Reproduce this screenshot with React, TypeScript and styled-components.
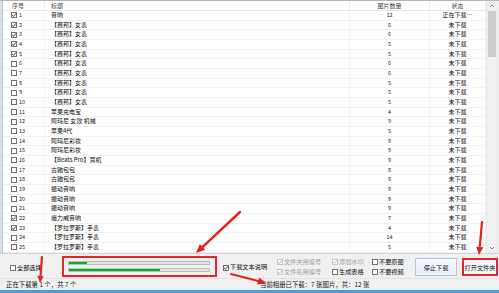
import React from "react";
import styled, { createGlobalStyle } from "styled-components";

const Global = createGlobalStyle`
  html, body { margin: 0; padding: 0; background: #ffffff; overflow: hidden; }
  body { font-family: "Noto Sans CJK SC", "Noto Sans", sans-serif; }
`;

type Row = { n: number; checked: boolean; title: string; count: number; status: string };

const titles: [boolean, string, number][] = [
  [true, "音响", 12],
  [true, "【赛邦】女表", 6],
  [true, "【赛邦】女表", 6],
  [true, "【赛邦】女表", 5],
  [true, "【赛邦】女表", 5],
  [false, "【赛邦】女表", 6],
  [false, "【赛邦】女表", 6],
  [false, "【赛邦】女表", 5],
  [false, "【赛邦】女表", 5],
  [false, "【赛邦】女表", 5],
  [false, "苹果充电宝", 4],
  [false, "阿玛尼 女款 机械", 9],
  [false, "苹果4代", 5],
  [false, "阿玛尼彩妆", 9],
  [false, "阿玛尼彩妆", 9],
  [false, "【Beats Pro】耳机", 9],
  [false, "古驰包包", 8],
  [false, "古驰包包", 8],
  [false, "振动音响", 9],
  [false, "振动音响", 9],
  [false, "振动音响", 9],
  [true, "魔力威音响", 7],
  [true, "【罗拉罗斯】手表", 4],
  [false, "【罗拉罗斯】手表", 14],
  [false, "【罗拉罗斯】手表", 5],
];

const rows: Row[] = titles.map(([c, t, k], i) => ({
  n: i + 1,
  checked: c,
  title: t,
  count: k,
  status: i === 0 ? "正在下载…" : "未下载",
}));

const Window = styled.div`
  position: relative;
  width: 499px;
  height: 293px;
  display: flex;
  flex-direction: column;
  background: #f0f0f0;
  overflow: hidden;
`;

const ListFrame = styled.div`
  height: 254px;
  display: flex;
  border-top: 1px solid #b4b4b4;
  border-bottom: 1px solid #d4d4d4;
  background: #ffffff;
  box-sizing: border-box;
`;

const LeftEdge = styled.div`
  width: 3px;
  background: #d3dfeb;
  border-right: 1px solid #b9c3cc;
  box-sizing: border-box;
`;

const Grid = styled.div`
  flex: 1;
  display: flex;
  flex-direction: column;
  overflow: hidden;
  background: #ffffff;
`;

const HeaderRow = styled.div`
  height: 9px;
  display: grid;
  grid-template-columns: 42px 305px 80px 1fr;
  align-items: center;
  border-bottom: 1px solid #e6e6e6;
  flex-shrink: 0;
`;

const HeadCell = styled.div<{ $center?: boolean; $pad?: number }>`
  font-size: 6px;
  line-height: 9px;
  color: #3a3a3a;
  padding-left: ${(p) => p.$pad ?? 0}px;
  text-align: ${(p) => (p.$center ? "center" : "left")};
  border-right: 1px solid #f0f0f0;
  height: 100%;
  box-sizing: border-box;
  white-space: nowrap;
`;

const DataRow = styled.div`
  height: 9.68px;
  display: grid;
  grid-template-columns: 42px 305px 80px minmax(0, 1fr);
  align-items: center;
  border-bottom: 1px solid #f2f2f2;
  box-sizing: border-box;
  flex-shrink: 0;
`;

const Cell = styled.div<{ $center?: boolean; $pad?: number }>`
  font-size: 6px;
  line-height: 8.6px;
  color: #0a0a0a;
  padding-left: ${(p) => p.$pad ?? 0}px;
  text-align: ${(p) => (p.$center ? "center" : "left")};
  white-space: nowrap;
  height: 100%;
  display: flex;
  align-items: center;
  justify-content: ${(p) => (p.$center ? "center" : "flex-start")};
  border-right: 1px solid #f4f4f4;
  box-sizing: border-box;
`;

const SeqCell = styled(Cell)`
  padding-left: 8px;
  gap: 2px;
`;

const Num = styled.span`
  font-size: 5.5px;
  color: #222;
`;

const Box = styled.span<{ $disabled?: boolean }>`
  width: 6px;
  height: 6px;
  border: 1px solid ${(p) => (p.$disabled ? "#c4c4c4" : "#6f6f6f")};
  background: #ffffff;
  box-sizing: border-box;
  display: inline-flex;
  align-items: center;
  justify-content: center;
  flex-shrink: 0;
  position: relative;
`;

const Check: React.FC<{ checked?: boolean; disabled?: boolean }> = ({ checked, disabled }) => (
  <Box $disabled={disabled}>
    {checked && (
      <svg width="6" height="6" viewBox="0 0 6 6" style={{ position: "absolute", left: -1, top: -1 }}>
        <path d="M1.2 3.1 L2.5 4.4 L4.9 1.4" fill="none" stroke={disabled ? "#a8a8a8" : "#222"} strokeWidth="0.9" />
      </svg>
    )}
  </Box>
);

const Scrollbar = styled.div`
  width: 11px;
  background: #f0f0f0;
  display: flex;
  flex-direction: column;
  align-items: center;
  border-left: 1px solid #e8e8e8;
  box-sizing: border-box;
`;

const ScrollArrow = styled.div`
  height: 10px;
  width: 100%;
  display: flex;
  align-items: center;
  justify-content: center;
`;

const Thumb = styled.div`
  width: 8px;
  height: 46px;
  background: #cdcdcd;
`;

const ScrollTrack = styled.div`
  flex: 1;
`;

const RightEdge = styled.div`
  width: 2px;
  background: #e9e9e9;
`;

const Panel = styled.div`
  height: 24px;
  display: flex;
  align-items: center;
  background: #f0f0f0;
  flex-shrink: 0;
  box-sizing: border-box;
`;

const CheckLabel = styled.label<{ $disabled?: boolean }>`
  display: flex;
  align-items: center;
  gap: 1px;
  font-size: 6.2px;
  line-height: 8.5px;
  height: 8.5px;
  color: ${(p) => (p.$disabled ? "#a3a3a3" : "#111")};
  white-space: nowrap;
`;

const SelectAll = styled.div`
  margin-left: 10px;
  width: 52px;
  margin-top: 4px;
`;

const ProgressBox = styled.div`
  width: 155px;
  height: 21px;
  margin-top: 1px;
  border: 2px solid #e3262b;
  box-sizing: border-box;
  display: flex;
  flex-direction: column;
  justify-content: center;
  gap: 3px;
  padding: 0 5px 0 4px;
`;

const Track = styled.div`
  height: 4px;
  background: #e6e6e6;
  border: 1px solid #bcbcbc;
  box-sizing: border-box;
  position: relative;
  overflow: hidden;
`;

const Fill = styled.div`
  height: 100%;
  background: #06b025;
`;

const TextCheck = styled.div`
  margin-left: 6px;
  width: 54px;
  margin-top: 3px;
`;

const OptCol = styled.div<{ $w: number }>`
  width: ${(p) => p.$w}px;
  display: flex;
  flex-direction: column;
  gap: 2px;
  margin-top: 2px;
`;

const Button = styled.button<{ $marked?: boolean }>`
  height: 18px;
  margin-top: 2px;
  font-family: "Noto Sans CJK SC", sans-serif;
  font-size: 6.2px;
  color: #111;
  padding: 0;
  white-space: nowrap;
  box-sizing: border-box;
  border: ${(p) => (p.$marked ? "2px solid #e3262b" : "1px solid #b8c4d2")};
  background: ${(p) => (p.$marked ? "#f7f7f7" : "linear-gradient(#f6f9fd, #e6eef8)")};
`;

const StopButton = styled(Button)`
  width: 42px;
  margin-left: 4px;
`;

const OpenButton = styled(Button)`
  width: 36px;
  margin-left: 5px;
`;

const StatusBar = styled.div`
  height: 12px;
  display: flex;
  align-items: center;
  font-size: 6.4px;
  color: #111;
  background: #f0f0f0;
  border-top: 1px solid #e2e2e2;
  box-sizing: border-box;
  white-space: nowrap;
`;

const StatusLeft = styled.div`
  width: 260px;
  padding-left: 6px;
  box-sizing: border-box;
`;

const StatusRight = styled.div``;

const TaskStrip = styled.div`
  height: 3px;
  background: #4b9be3;
`;

const Overlay = styled.svg`
  position: absolute;
  left: 0;
  top: 0;
  pointer-events: none;
`;

type ArrowSpec = { x1: number; y1: number; x2: number; y2: number; w: number; head: number };

const arrows: ArrowSpec[] = [
  { x1: 240, y1: 212, x2: 196, y2: 253, w: 2.4, head: 9 },
  { x1: 42, y1: 257, x2: 40, y2: 283, w: 2.2, head: 7 },
  { x1: 231, y1: 274, x2: 266, y2: 283, w: 2, head: 8 },
  { x1: 482, y1: 222, x2: 479, y2: 255, w: 2.2, head: 8 },
];

const Arrow: React.FC<{ a: ArrowSpec }> = ({ a }) => {
  const dx = a.x2 - a.x1;
  const dy = a.y2 - a.y1;
  const len = Math.hypot(dx, dy);
  const ux = dx / len;
  const uy = dy / len;
  const bx = a.x2 - ux * a.head;
  const by = a.y2 - uy * a.head;
  const hw = a.head * 0.45;
  const p1 = `${bx - uy * hw},${by + ux * hw}`;
  const p2 = `${bx + uy * hw},${by - ux * hw}`;
  return (
    <g>
      <line x1={a.x1} y1={a.y1} x2={bx + ux} y2={by + uy} stroke="#e8221b" strokeWidth={a.w} strokeLinecap="round" />
      <polygon points={`${a.x2},${a.y2} ${p1} ${p2}`} fill="#e8221b" />
    </g>
  );
};

export default function App() {
  return (
    <>
      <Global />
      <Window>
        <ListFrame>
          <LeftEdge />
          <Grid>
            <HeaderRow>
              <HeadCell $pad={9}>序号</HeadCell>
              <HeadCell $pad={6}>标题</HeadCell>
              <HeadCell $center>图片数量</HeadCell>
              <HeadCell $center>状态</HeadCell>
            </HeaderRow>
            {rows.map((r) => (
              <DataRow key={r.n}>
                <SeqCell>
                  <Check checked={r.checked} />
                  <Num>{r.n}</Num>
                </SeqCell>
                <Cell $pad={6}>{r.title}</Cell>
                <Cell $center>
                  <Num>{r.count}</Num>
                </Cell>
                <Cell $center>{r.status}</Cell>
              </DataRow>
            ))}
          </Grid>
          <Scrollbar>
            <ScrollArrow>
              <svg width="6" height="4" viewBox="0 0 6 4">
                <path d="M1 3 L3 1 L5 3" fill="none" stroke="#606060" strokeWidth="0.8" />
              </svg>
            </ScrollArrow>
            <Thumb />
            <ScrollTrack />
            <ScrollArrow>
              <svg width="6" height="4" viewBox="0 0 6 4">
                <path d="M1 1 L3 3 L5 1" fill="none" stroke="#606060" strokeWidth="0.8" />
              </svg>
            </ScrollArrow>
          </Scrollbar>
          <RightEdge />
        </ListFrame>
        <Panel>
          <SelectAll>
            <CheckLabel>
              <Check />
              全部选择
            </CheckLabel>
          </SelectAll>
          <ProgressBox>
            <Track>
              <Fill style={{ width: "13%" }} />
            </Track>
            <Track>
              <Fill style={{ width: "65%" }} />
            </Track>
          </ProgressBox>
          <TextCheck>
            <CheckLabel>
              <Check checked />
              下载文本说明
            </CheckLabel>
          </TextCheck>
          <OptCol $w={55}>
            <CheckLabel $disabled>
              <Check checked disabled />
              文件夹用编号
            </CheckLabel>
            <CheckLabel $disabled>
              <Check checked disabled />
              文件名用编号
            </CheckLabel>
          </OptCol>
          <OptCol $w={40}>
            <CheckLabel $disabled>
              <Check checked disabled />
              添加水印
            </CheckLabel>
            <CheckLabel>
              <Check />
              生成表格
            </CheckLabel>
          </OptCol>
          <OptCol $w={39}>
            <CheckLabel>
              <Check />
              不要原图
            </CheckLabel>
            <CheckLabel>
              <Check />
              不要视频
            </CheckLabel>
          </OptCol>
          <StopButton>停止下载</StopButton>
          <OpenButton $marked>打开文件夹</OpenButton>
        </Panel>
        <StatusBar>
          <StatusLeft>正在下载第 1 个，共 7 个</StatusLeft>
          <StatusRight>当前相册已下载：7 张图片，共：12 张</StatusRight>
        </StatusBar>
        <TaskStrip />
        <Overlay width="499" height="293" viewBox="0 0 499 293">
          {arrows.map((a, i) => (
            <Arrow key={i} a={a} />
          ))}
        </Overlay>
      </Window>
    </>
  );
}
